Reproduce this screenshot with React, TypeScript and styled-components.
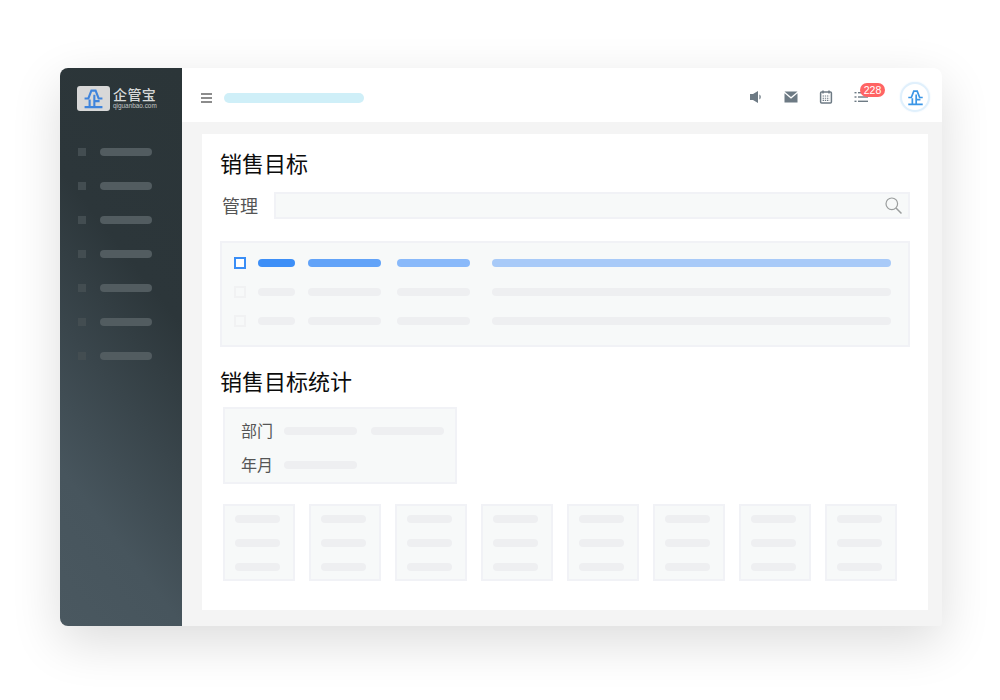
import { createGlobalStyle, styled } from "styled-components";

const GlobalStyle = createGlobalStyle`
  html, body {
    margin: 0;
    background: #fff;
  }
  #root {
    box-sizing: border-box;
    width: 1000px;
    height: 700px;
    padding: 68px 58px 0 60px;
    overflow: hidden;
    font-family: "Noto Sans CJK SC", "Noto Sans", sans-serif;
  }
`;

const Frame = styled.div`
  display: flex;
  width: 882px;
  height: 558px;
  border-radius: 8px 8px 2px 8px;
  background: #f4f4f4;
  box-shadow: 0 16px 50px rgba(0, 0, 0, 0.14);
`;

const Sidebar = styled.aside`
  flex: 0 0 122px;
  box-sizing: border-box;
  padding: 18px 0 0 17px;
  border-radius: 8px 0 0 8px;
  background: linear-gradient(232deg, #2b3538 0%, #2c363a 36%, #47555d 78%, #4a5860 100%);
`;

const Brand = styled.div`
  display: flex;
  align-items: center;
  gap: 3px;
  height: 25px;
`;

const BrandMark = styled.div`
  display: flex;
  width: 33px;
  height: 25px;
  border-radius: 3px;
  background: #d8d8d8;
`;

const BrandText = styled.div`
  display: flex;
  flex-direction: column;
  color: #d6d9d9;
`;

const BrandName = styled.span`
  font-size: 14px;
  font-weight: 500;
  line-height: 15px;
  letter-spacing: 0.4px;
  white-space: nowrap;
`;

const BrandUrl = styled.span`
  font-family: "Liberation Sans", sans-serif;
  font-size: 6.4px;
  line-height: 8px;
  white-space: nowrap;
  color: #c0c4c5;
`;

const SideNav = styled.nav`
  display: flex;
  flex-direction: column;
  gap: 26px;
  margin: 37px 0 0 1px;
`;

const SideItem = styled.div`
  display: flex;
  gap: 14px;
`;

const SideDot = styled.i`
  width: 8px;
  height: 8px;
  background: #434d51;
`;

const SideBar = styled.i`
  width: 52px;
  height: 8px;
  border-radius: 4px;
  background: #525c60;
`;

const Main = styled.div`
  flex: 1;
  display: flex;
  flex-direction: column;
  min-width: 0;
`;

const TopBar = styled.header`
  display: flex;
  align-items: center;
  box-sizing: border-box;
  height: 54px;
  padding: 6px 12px 0 19px;
  border-radius: 0 8px 0 0;
  background: #fff;
`;

const PagePill = styled.div`
  width: 140px;
  height: 10px;
  margin-left: 12px;
  border-radius: 5px;
  background: #cfeff8;
`;

const TopIcons = styled.div`
  display: flex;
  align-items: center;
  gap: 21px;
  margin: 0 0 2px auto;
`;

const IconSlot = styled.div`
  position: relative;
  display: flex;
  width: 14px;
  height: 14px;
`;

const Badge = styled.span`
  position: absolute;
  top: -7px;
  left: 6px;
  width: 25px;
  height: 14px;
  border-radius: 7px;
  background: #ff6464;
  color: #fff;
  font-family: "Liberation Sans", sans-serif;
  font-size: 10.5px;
  line-height: 14px;
  text-align: center;
`;

const Avatar = styled.div`
  display: flex;
  align-items: center;
  justify-content: center;
  box-sizing: border-box;
  width: 30px;
  height: 30px;
  margin-left: 11px;
  border: 2px solid #e0f0fc;
  border-radius: 50%;
  background: #fff;
  box-shadow: 0 0 2px #e3f1fd;
`;

const Content = styled.main`
  padding: 12px 14px 16px 20px;
`;

const Card = styled.section`
  box-sizing: border-box;
  height: 476px;
  padding: 13px 18px 0;
  background: #fff;
`;

const Title = styled.h2<{ $top?: number }>`
  margin: ${(p) => p.$top ?? 0}px 0 0;
  color: #0c0c0c;
  font-size: 22px;
  font-weight: 400;
  line-height: 30px;
`;

const SearchRow = styled.div`
  display: flex;
  align-items: center;
  gap: 16px;
  margin: 15px 0 0 2px;
`;

const SearchLabel = styled.label`
  color: #555;
  font-size: 18px;
  line-height: 27px;
`;

const SearchBox = styled.div`
  display: flex;
  align-items: center;
  justify-content: flex-end;
  box-sizing: border-box;
  width: 636px;
  height: 27px;
  padding-right: 5px;
  border: 2px solid #f1f2f6;
  background: #f7f9f9;
`;

const TableBox = styled.div`
  display: flex;
  flex-direction: column;
  gap: 17px;
  box-sizing: border-box;
  height: 106px;
  margin-top: 22px;
  padding: 14px 0 0 12px;
  border: 2px solid #f1f2f6;
  background: #f7f9f9;
`;

const TableRow = styled.div`
  display: grid;
  grid-template-columns: 24px 50px 89px 95px 399px;
  align-items: center;
  height: 12px;
`;

const Check = styled.i<{ $active?: boolean }>`
  box-sizing: border-box;
  width: 12px;
  height: 12px;
  border: 2px solid ${(p) => (p.$active ? "#3a8ef6" : "#f1f2f3")};
  background: ${(p) => (p.$active ? "#fff" : "transparent")};
`;

const Pill = styled.i<{ $w: number; $color?: string }>`
  display: block;
  flex: none;
  width: ${(p) => p.$w}px;
  height: 8px;
  border-radius: 4px;
  background: ${(p) => p.$color ?? "#eeeff1"};
`;

const FilterBox = styled.div`
  display: flex;
  flex-direction: column;
  gap: 14px;
  box-sizing: border-box;
  width: 234px;
  height: 77px;
  margin: 12px 0 0 3px;
  padding: 12px 0 0 16px;
  border: 2px solid #f1f2f6;
  background: #f7f9f9;
`;

const FilterRow = styled.div`
  display: flex;
  align-items: center;
  height: 20px;
`;

const FilterLabel = styled.span`
  align-self: flex-start;
  width: 43px;
  color: #555;
  font-size: 16px;
  line-height: 18px;
`;

const FilterGap = styled.div`
  display: flex;
  gap: 14px;
`;

const StatGrid = styled.div`
  display: flex;
  gap: 14px;
  margin: 20px 0 0 3px;
`;

const StatCard = styled.div`
  display: flex;
  flex-direction: column;
  gap: 16px;
  box-sizing: border-box;
  width: 72px;
  height: 77px;
  padding: 9px 0 0 10px;
  border: 2px solid #f1f2f6;
  background: #f7f9f9;
`;

const Menu = () => (
  <svg width="11" height="10" viewBox="0 0 11 10" fill="#8c8c8c">
    <rect width="11" height="2" />
    <rect y="4" width="11" height="2" />
    <rect y="8" width="11" height="2" />
  </svg>
);

const Speaker = () => (
  <svg width="14" height="14" viewBox="0 0 14 14" fill="#6d7a84">
    <path d="M1 4h3l5-3v12l-5-3H1z" />
    <path d="M10.400 4.500c1.800.7 1.800 4.300 0 5z" />
  </svg>
);

const Mail = () => (
  <svg width="14" height="14" viewBox="0 0 14 14" fill="#6d7a84">
    <path d="M.5 1.500h13L7 7z" />
    <path d="M.5 3.300 7 8.800l6.500-5.500V12.500H.5z" />
  </svg>
);

const Calendar = () => (
  <svg width="14" height="14" viewBox="0 0 14 14" fill="none" stroke="#6d7a84">
    <rect x="1.600" y="2" width="10.800" height="11" rx="1" strokeWidth="1.500" />
    <path d="M4 .4v3M10 .4v3" strokeWidth="1.500" />
    <path d="M3.600 6h6.800M3.600 8.200h6.800M3.600 10.400h6.800" strokeWidth="1.100" strokeDasharray="1.400 .8" />
  </svg>
);

const Tasks = () => (
  <svg width="14" height="14" viewBox="0 0 14 14" fill="#6d7a84">
    <rect x="0.500" y="2" width="2" height="1.400" />
    <rect x="4" y="2" width="10" height="1.400" />
    <rect x="0.500" y="6.300" width="2" height="1.400" />
    <rect x="4" y="6.300" width="10" height="1.400" />
    <rect x="0.500" y="10.600" width="2" height="1.400" />
    <rect x="4" y="10.600" width="10" height="1.400" />
  </svg>
);

const Search = () => (
  <svg width="18" height="18" viewBox="0 0 18 18" fill="none" stroke="#9a9d9d" strokeWidth="1.200">
    <circle cx="6.800" cy="6.800" r="5.800" />
    <path d="m11 11 5.500 5.500" strokeWidth="1.500" />
  </svg>
);

// house-shaped company mark, used in the logo and the avatar
const Mark = ({ size, color }: { size: number; color: string }) => (
  <svg width={size} height={size} viewBox="0 0 20 20" fill="none" stroke={color} strokeWidth="2" style={{ margin: "auto" }}>
    <path d="M1.500 10h3.600L8 2.500h4l2.900 7.500h3.600" />
    <path d="M6.300 11v7M10.800 6.500v11.500M10.800 12.500h5M1.500 18.200h17" />
  </svg>
);

const sideItems = [1, 2, 3, 4, 5, 6, 7];
const rowColors = ["#3d8ff7", "#62a3f8", "#89b9fa", "#a8caf8"];
const statCards = [1, 2, 3, 4, 5, 6, 7, 8];

const App = () => {
  return (
    <>
      <GlobalStyle />
      <Frame>
        <Sidebar>
          <Brand>
            <BrandMark>
              <Mark size={21} color="#3f84dc" />
            </BrandMark>
            <BrandText>
              <BrandName>企管宝</BrandName>
              <BrandUrl>qiguanbao.com</BrandUrl>
            </BrandText>
          </Brand>
          <SideNav>
            {sideItems.map((item) => (
              <SideItem key={item}>
                <SideDot />
                <SideBar />
              </SideItem>
            ))}
          </SideNav>
        </Sidebar>
        <Main>
          <TopBar>
            <Menu />
            <PagePill />
            <TopIcons>
              <IconSlot><Speaker /></IconSlot>
              <IconSlot><Mail /></IconSlot>
              <IconSlot><Calendar /></IconSlot>
              <IconSlot>
                <Tasks />
                <Badge>228</Badge>
              </IconSlot>
              <Avatar>
                <Mark size={17} color="#3b96e6" />
              </Avatar>
            </TopIcons>
          </TopBar>
          <Content>
            <Card>
              <Title>销售目标</Title>
              <SearchRow>
                <SearchLabel>管理</SearchLabel>
                <SearchBox>
                  <Search />
                </SearchBox>
              </SearchRow>
              <TableBox>
                <TableRow>
                  <Check $active />
                  <Pill $w={37} $color={rowColors[0]} />
                  <Pill $w={73} $color={rowColors[1]} />
                  <Pill $w={73} $color={rowColors[2]} />
                  <Pill $w={399} $color={rowColors[3]} />
                </TableRow>
                {[1, 2].map((row) => (
                  <TableRow key={row}>
                    <Check />
                    <Pill $w={37} />
                    <Pill $w={73} />
                    <Pill $w={73} />
                    <Pill $w={399} />
                  </TableRow>
                ))}
              </TableBox>
              <Title $top={18}>销售目标统计</Title>
              <FilterBox>
                <FilterRow>
                  <FilterLabel>部门</FilterLabel>
                  <FilterGap>
                    <Pill $w={73} />
                    <Pill $w={73} />
                  </FilterGap>
                </FilterRow>
                <FilterRow>
                  <FilterLabel>年月</FilterLabel>
                  <Pill $w={73} />
                </FilterRow>
              </FilterBox>
              <StatGrid>
                {statCards.map((card) => (
                  <StatCard key={card}>
                    <Pill $w={45} />
                    <Pill $w={45} />
                    <Pill $w={45} />
                  </StatCard>
                ))}
              </StatGrid>
            </Card>
          </Content>
        </Main>
      </Frame>
    </>
  );
};

export default App;
